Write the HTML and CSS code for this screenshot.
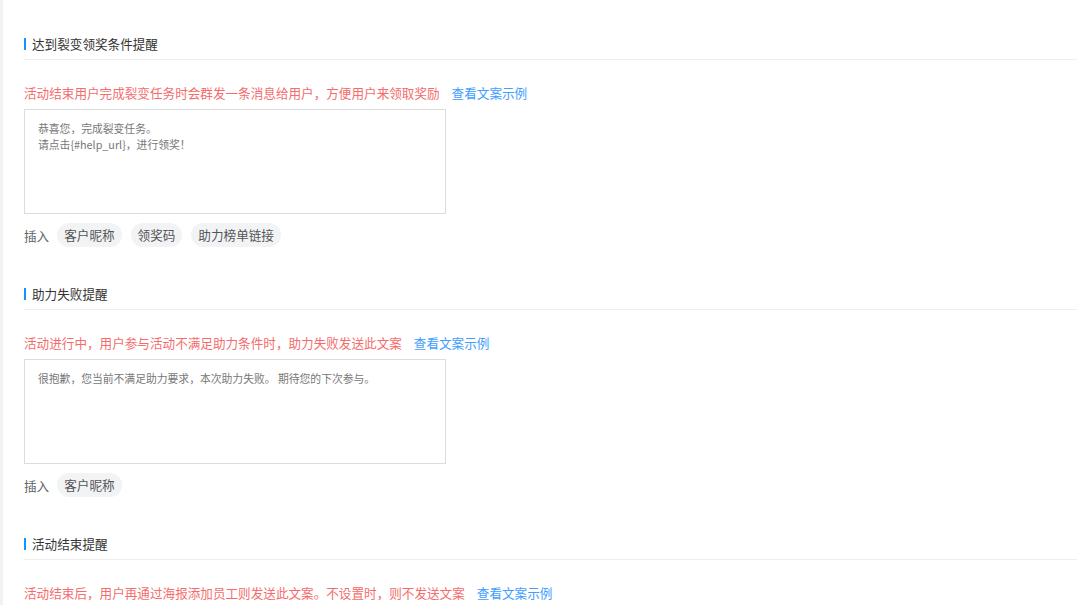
FILE: index.html
```html
<!DOCTYPE html>
<html lang="zh-CN">
<head>
  <meta charset="UTF-8">
  <meta name="viewport" content="width=device-width, initial-scale=1.0">
  <title>提醒设置</title>
  <link rel="stylesheet" href="styles.css">
</head>
<body>

  <div class="page">

    <div class="section">
      <div class="section-title">达到裂变领奖条件提醒</div>
      <div class="tip">
        <span class="tip-text">活动结束用户完成裂变任务时会群发一条消息给用户，方便用户来领取奖励</span>
        <a class="tip-link" href="#">查看文案示例</a>
      </div>
      <textarea class="msg-box" readonly>恭喜您，完成裂变任务。
请点击{#help_url}，进行领奖！</textarea>
      <div class="insert-row">
        <span class="insert-label">插入</span>
        <span class="tag">客户昵称</span>
        <span class="tag">领奖码</span>
        <span class="tag">助力榜单链接</span>
      </div>
    </div>

    <div class="section">
      <div class="section-title">助力失败提醒</div>
      <div class="tip">
        <span class="tip-text">活动进行中，用户参与活动不满足助力条件时，助力失败发送此文案</span>
        <a class="tip-link" href="#">查看文案示例</a>
      </div>
      <textarea class="msg-box" readonly>很抱歉，您当前不满足助力要求，本次助力失败。 期待您的下次参与。</textarea>
      <div class="insert-row">
        <span class="insert-label">插入</span>
        <span class="tag">客户昵称</span>
      </div>
    </div>

    <div class="section">
      <div class="section-title">活动结束提醒</div>
      <div class="tip">
        <span class="tip-text">活动结束后，用户再通过海报添加员工则发送此文案。不设置时，则不发送文案</span>
        <a class="tip-link" href="#">查看文案示例</a>
      </div>
    </div>

  </div>

</body>
</html>
```

FILE: styles.css
```css
html, body {
  margin: 0;
  height: 100%;
  overflow: hidden;
}

body {
  box-sizing: border-box;
  font-family: "Noto Sans CJK SC", "Noto Sans", sans-serif;
  font-size: 12.6px;
  color: #333;
  background-color: #fff;
  border-left: 3px solid #f0f2f5;
}

.page {
  padding: 34px 3px 0 21px;
}

.section {
  margin-bottom: 37px;
}

.section:last-child {
  margin-bottom: 0;
}

.section-title {
  line-height: 20px;
  padding-bottom: 5px;
  border-bottom: 1px solid #eeeeee;
  display: flex;
  align-items: center;
  color: #333;
}

.section-title::before {
  content: "";
  width: 2px;
  height: 12px;
  background-color: #1890ff;
  margin-right: 6px;
}

.tip {
  margin-top: 23px;
  line-height: 20px;
  display: flex;
  gap: 12px;
}

.tip-text {
  color: #f56c6c;
}

.tip-link {
  color: #409eff;
  text-decoration: none;
}

.msg-box {
  display: block;
  box-sizing: border-box;
  width: 422px;
  height: 105px;
  margin-top: 6px;
  padding: 10px 13px;
  border: 1px solid #dcdcdc;
  border-radius: 0;
  resize: none;
  outline: none;
  overflow: hidden;
  font-family: "Noto Sans CJK SC", "Noto Sans", sans-serif;
  font-size: 10.8px;
  line-height: 16px;
  color: #777;
}

.insert-row {
  margin-top: 9px;
  display: flex;
  align-items: center;
  gap: 9px;
  color: #606266;
}

.insert-label {
  margin-right: -1px;
}

.tag {
  height: 24px;
  line-height: 24px;
  padding: 0 7px;
  border-radius: 12px;
  background-color: #f2f3f5;
  color: #555;
}
```
